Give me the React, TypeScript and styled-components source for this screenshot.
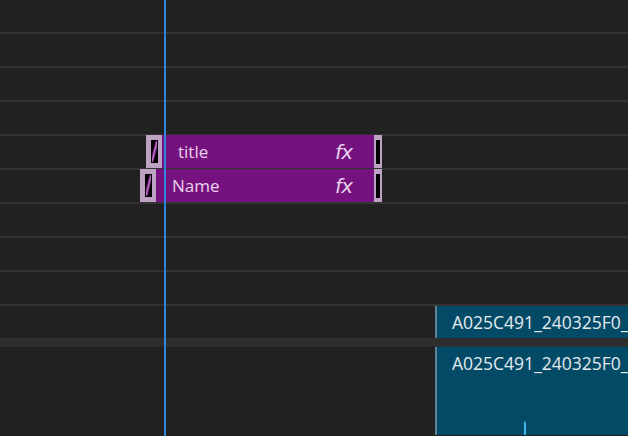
import * as React from 'react'
import styled, { createGlobalStyle } from 'styled-components'

const GlobalStyle = createGlobalStyle`
  html, body { margin: 0; padding: 0; background: #212121; }
  body { font-family: "Open Sans", "Noto Sans", sans-serif; overflow: hidden; }
`

type Graphic = { name: string; start: number; textIndent: number }

const CLIP_END = 382

const graphics: (Graphic | null)[] = [
  null,
  null,
  null,
  null,
  { name: 'title', start: 146, textIndent: 16 },
  { name: 'Name', start: 140, textIndent: 16 },
  null,
  null,
  null,
]

const App = () => (
  <>
    <GlobalStyle />
    <Timeline>
      <Section>
        {graphics.map((g, i) => (
          <Track key={i}>
            {g && (
              <GraphicClip style={{ marginLeft: g.start, width: CLIP_END - g.start }}>
                <LeftHandle>
                  <Grip />
                </LeftHandle>
                <ClipBody $indent={g.textIndent}>
                  <ClipName>{g.name}</ClipName>
                  <Fx>fx</Fx>
                </ClipBody>
                <RightHandle>
                  <Bar />
                </RightHandle>
              </GraphicClip>
            )}
          </Track>
        ))}
      </Section>
      <Section>
        <VideoTrack $height={32}>
          <VideoClip>
            <ClipLabel>A025C491_240325F0_</ClipLabel>
          </VideoClip>
        </VideoTrack>
        <Divider />
        <VideoTrack $height={88}>
          <VideoClip>
            <ClipLabel>A025C491_240325F0_</ClipLabel>
            <Marker />
          </VideoClip>
        </VideoTrack>
      </Section>
      <Playhead />
    </Timeline>
  </>
)

const Timeline = styled.div`
  position: relative;
  width: 628px;
  height: 436px;
  overflow: hidden;
  background: #212121;
  display: flex;
  flex-direction: column;
`

const Section = styled.div`
  display: flex;
  flex-direction: column;
`

const Track = styled.div`
  height: 32px;
  border-bottom: 2px solid #333333;
  display: flex;
  align-items: stretch;
`

const GraphicClip = styled.div`
  display: flex;
  height: 33px;
  margin-top: -1px;
`

const LeftHandle = styled.div`
  width: 16px;
  background: #bda2c4;
  display: flex;
  align-items: center;
  justify-content: center;
`

const Grip = styled.div`
  width: 5px;
  height: 21px;
  border: 1px solid #000;
  background: linear-gradient(
    104deg,
    #000 0%,
    #000 28%,
    #6b1c75 38%,
    #c27fcb 50%,
    #6b1c75 62%,
    #000 72%,
    #000 100%
  );
`

const ClipBody = styled.div<{ $indent: number }>`
  flex: 1;
  background: #76127f;
  display: flex;
  align-items: center;
  justify-content: space-between;
  padding: 0 22px 0 ${p => p.$indent}px;
  color: #e9d3ec;
`

const ClipName = styled.span`
  font-size: 17px;
  line-height: 1;
`

const Fx = styled.span`
  font-family: "DejaVu Sans", sans-serif;
  font-style: italic;
  font-size: 20px;
  line-height: 1;
  letter-spacing: -1px;
  color: #e9d3ec;
`

const RightHandle = styled.div`
  width: 8px;
  background: #bda2c4;
  display: flex;
  align-items: center;
  justify-content: center;
`

const Bar = styled.div`
  width: 4px;
  height: 24px;
  background: #000;
`

const VideoTrack = styled.div<{ $height: number }>`
  height: ${p => p.$height}px;
  display: flex;
  padding-left: 435px;
`

const Divider = styled.div`
  height: 9px;
  background: #2e2e2e;
`

const VideoClip = styled.div`
  position: relative;
  flex: 1;
  background: #034a66;
  border-left: 2px solid #5a8599;
  padding: 5px 0 0 15px;
`

const ClipLabel = styled.div`
  font-size: 17.5px;
  line-height: 22px;
  color: #e3ebef;
  white-space: nowrap;
`

const Marker = styled.div`
  position: absolute;
  left: 87px;
  bottom: 0;
  width: 2px;
  height: 13px;
  background: #3cb6ea;
  border-top: 2px solid #0a5b7a;
`

const Playhead = styled.div`
  position: absolute;
  top: 0;
  bottom: 0;
  left: 164px;
  width: 2px;
  background: #2f86da;
`

export default App
